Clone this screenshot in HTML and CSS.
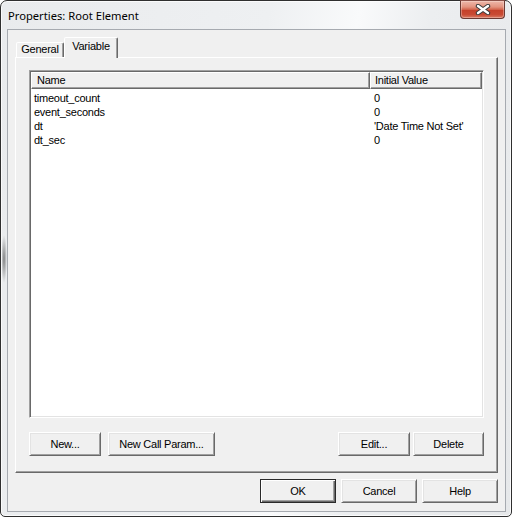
FILE: index.html
```html
<!DOCTYPE html>
<html lang="en">
<head>
<meta charset="utf-8">
<title>Properties: Root Element</title>
<link rel="stylesheet" href="styles.css">
</head>
<body>
<div class="window">
  <div class="titlebar">
    <span class="title">Properties: Root Element</span>
    <div class="close" aria-label="Close">
      <svg width="16" height="11" viewBox="0 0 16 11">
        <path d="M3 2 L13 9 M13 2 L3 9" stroke="#3b3b3b" stroke-width="4.4" stroke-linecap="round"/>
        <path d="M3 2 L13 9 M13 2 L3 9" stroke="#ffffff" stroke-width="2.4" stroke-linecap="round"/>
      </svg>
    </div>
  </div>
  <div class="client">
    <div class="tabs">
      <div class="tab tab-general">General</div>
      <div class="tab tab-variable active">Variable</div>
    </div>
    <div class="pane">
      <div class="listview">
        <div class="lv-header">
          <div class="lv-col">Name</div>
          <div class="lv-col lv-col-value">Initial Value</div>
        </div>
        <div class="lv-body">
          <div class="lv-row"><span class="c1">timeout_count</span><span class="c2">0</span></div>
          <div class="lv-row"><span class="c1">event_seconds</span><span class="c2">0</span></div>
          <div class="lv-row"><span class="c1">dt</span><span class="c2">'Date Time Not Set'</span></div>
          <div class="lv-row"><span class="c1">dt_sec</span><span class="c2">0</span></div>
        </div>
      </div>
      <div class="pane-buttons">
        <div class="btn-group wide">
          <div class="btn w-new">New...</div>
          <div class="btn w-newcall">New Call Param...</div>
        </div>
        <div class="btn-group narrow">
          <div class="btn w-edit">Edit...</div>
          <div class="btn w-delete">Delete</div>
        </div>
      </div>
    </div>
    <div class="dialog-buttons">
      <div class="btn default w-dlg">OK</div>
      <div class="btn w-dlg">Cancel</div>
      <div class="btn w-dlg">Help</div>
    </div>
  </div>
</div>
</body>
</html>
```
FILE: styles.css
```css
* { box-sizing: border-box; }
html, body { margin: 0; padding: 0; }
body {
  width: 512px;
  height: 517px;
  overflow: hidden;
  background: #ffffff;
  font-family: "Liberation Sans", Arial, sans-serif;
  font-size: 11px;
  letter-spacing: -0.25px;
  color: #000;
}

.window {
  width: 512px;
  height: 517px;
  border: 1px solid #2f2f2f;
  border-radius: 7px 7px 5px 5px;
  padding: 0 5px 4px 6px;
  display: flex;
  flex-direction: column;
  background:
    radial-gradient(ellipse 3px 24px at 3px 258px, rgba(60,60,60,0.6), rgba(60,60,60,0)),
    linear-gradient(100deg, #e9ebed 0%, #eef0f2 45%, #f9fafb 60%, #eceef0 72%, #e6e8ea 100%);
  box-shadow: inset 0 0 0 1px rgba(255,255,255,0.75);
}

.titlebar {
  height: 28px;
  display: flex;
  align-items: flex-start;
  flex-shrink: 0;
}
.title {
  font-family: "Noto Sans", "Liberation Sans", sans-serif;
  font-size: 11.2px;
  letter-spacing: 0;
  line-height: 15px;
  margin: 7px 0 0 1px;
  color: #000;
}
.close {
  margin-left: auto;
  margin-top: -1px;
  margin-right: 1px;
  width: 45px;
  height: 19px;
  border: 1px solid #6b3a33;
  border-top-color: #8a5048;
  border-radius: 0 0 4px 4px;
  background: linear-gradient(#edb8ab 0%, #e3937f 35%, #d2644d 50%, #c5412a 55%, #c94b34 80%, #d87b63 100%);
  box-shadow: inset 0 0 0 1px rgba(255,235,230,0.35);
  display: flex;
  align-items: center;
  justify-content: center;
}
.close svg { display: block; }

.client {
  flex: 1;
  border: 1px solid #a6aab0;
  background: #f0f0f0;
  padding: 7px 7px 8px 7px;
  display: flex;
  flex-direction: column;
}

.tabs {
  height: 20px;
  display: flex;
  align-items: flex-end;
  padding-left: 1px;
  flex-shrink: 0;
}
.tab {
  height: 15px;
  border: 1px solid;
  border-bottom: none;
  border-color: #fff #696969 transparent #fff;
  border-radius: 2px 2px 0 0;
  box-shadow: inset -1px 0 #a0a0a0;
  background: #f0f0f0;
  text-align: center;
  line-height: 13px;
}
.tab-general { width: 48px; }
.tab-variable { width: 54px; }
.tab.active {
  height: 21px;
  margin-bottom: -1px;
  line-height: 17px;
  position: relative;
  z-index: 1;
}

.pane {
  flex: 1;
  border: 1px solid;
  border-color: #fff #696969 #696969 #fff;
  box-shadow: inset -1px -1px #a0a0a0;
  padding: 12px 13px 16px 13px;
  display: flex;
  flex-direction: column;
  gap: 14px;
}

.listview {
  flex: 1;
  background: #fff;
  border: 1px solid;
  border-color: #a0a0a0 #fff #fff #a0a0a0;
  box-shadow: inset 1px 1px #696969, inset -1px -1px #e3e3e3;
  padding: 1px;
}
.lv-header {
  display: grid;
  grid-template-columns: 339px 112px;
  height: 17px;
}
.lv-col {
  border: 1px solid;
  border-color: #fff #696969 #696969 #fff;
  box-shadow: inset -1px -1px #a0a0a0;
  background: #f0f0f0;
  padding-left: 5px;
  line-height: 14px;
  white-space: nowrap;
}
.lv-col-value { padding-left: 4px; }
.lv-body { padding-top: 2px; }
.lv-row {
  display: grid;
  grid-template-columns: 339px 112px;
  height: 14px;
  line-height: 14px;
  white-space: nowrap;
}
.lv-row .c1 { padding-left: 3px; }
.lv-row .c2 { padding-left: 4px; }

.pane-buttons {
  height: 24px;
  display: flex;
  justify-content: space-between;
  flex-shrink: 0;
}
.btn-group { display: flex; }
.btn-group.wide { gap: 7px; }
.btn-group.narrow { gap: 3px; }

.btn {
  height: 24px;
  background: #f0f0f0;
  border: 1px solid;
  border-color: #fff #696969 #696969 #fff;
  box-shadow: inset 1px 1px #e3e3e3, inset -1px -1px #a0a0a0;
  display: flex;
  align-items: center;
  justify-content: center;
  white-space: nowrap;
}
.btn.default {
  border-color: #2a2a2a;
  box-shadow: inset 1px 1px #fff, inset -1px -1px #696969, inset -2px -2px #a0a0a0;
}
.w-new { width: 72px; }
.w-newcall { width: 107px; }
.w-edit { width: 72px; }
.w-delete { width: 71px; }
.w-dlg { width: 76px; }

.dialog-buttons {
  height: 24px;
  margin-top: 6px;
  display: flex;
  justify-content: flex-end;
  gap: 5px;
  flex-shrink: 0;
}
```
